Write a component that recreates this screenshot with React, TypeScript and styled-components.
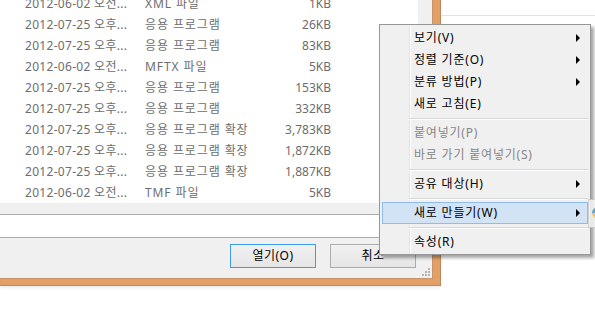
import React from "react";
import styled, { createGlobalStyle } from "styled-components";

const GlobalStyle = createGlobalStyle`
  html, body {
    margin: 0;
    padding: 0;
    background: #fff;
  }
  body {
    width: 595px;
    height: 316px;
    overflow: hidden;
    font-family: "Noto Sans", "Noto Sans CJK KR", sans-serif;
    font-size: 12px;
  }
`;

const Stage = styled.div`
  position: relative;
  display: flex;
  align-items: flex-start;
  width: 595px;
  height: 316px;
  overflow: hidden;
`;

const Frame = styled.div`
  flex: none;
  background: #e3a066;
  padding: 0 7px 6px 0;
  border-right: 1px solid #b98a5f;
  border-bottom: 1px solid #b98a5f;
  box-shadow: 0 2px 3px rgba(0, 0, 0, 0.08);
`;

const Dialog = styled.div`
  position: relative;
  width: 432px;
  height: 278px;
  display: flex;
  flex-direction: column;
  background: #f0f0f0;
  border-right: 1px solid #c99468;
  border-bottom: 1px solid #c99468;
`;

const FileList = styled.div`
  width: 418px;
  height: 203px;
  flex: none;
  background: #fff;
  overflow: hidden;
`;

const Rows = styled.div`
  margin-top: -7px;
`;

const Row = styled.div`
  display: grid;
  grid-template-columns: 120px 110px 76px;
  padding-left: 25px;
  height: 21px;
  align-items: center;
  line-height: 21px;
  color: #6d6d6d;
  white-space: nowrap;
`;

const Cell = styled.span<{ $spacing?: number }>`
  letter-spacing: ${(p) => p.$spacing ?? 0}px;
`;

const Size = styled.span`
  text-align: right;
`;

const FileNameField = styled.div`
  box-sizing: border-box;
  width: 418px;
  height: 24px;
  margin-top: 11px;
  flex: none;
  background: #fff;
  border-top: 1px solid #ababab;
  border-bottom: 1px solid #ababab;
  border-right: 1px solid #ababab;
`;

const ButtonBar = styled.div`
  display: flex;
  justify-content: flex-end;
  gap: 14px;
  margin-top: 6px;
  padding-right: 16px;
`;

const Button = styled.button<{ $primary?: boolean }>`
  box-sizing: border-box;
  width: 86px;
  height: 24px;
  padding: 0;
  font-family: "Noto Sans", "Noto Sans CJK KR", sans-serif;
  font-size: 12px;
  line-height: 20px;
  letter-spacing: 0.5px;
  color: #000;
  background: linear-gradient(#f0f0f0, #e5e5e5);
  border: 1px solid ${(p) => (p.$primary ? "#3c9cf0" : "#acacac")};
  border-radius: 0;
`;

const Grip = styled.svg`
  position: absolute;
  right: 2px;
  bottom: 2px;
`;

const BackWindow = styled.div`
  flex: 1;
  height: 15px;
  border-bottom: 1px solid #e2e2e2;
`;

const Menu = styled.div`
  position: absolute;
  left: 379px;
  top: 24px;
  width: 206px;
  padding: 2px 2px 1px;
  background: #f0f0f0;
  border: 1px solid #979797;
  box-shadow: 3px 3px 3px rgba(0, 0, 0, 0.35);

  &::before {
    content: "";
    position: absolute;
    left: 29px;
    top: 0;
    bottom: 0;
    width: 1px;
    background: #e2e3e3;
    box-shadow: 1px 0 0 #fff;
  }
`;

const MenuItem = styled.div<{ $disabled?: boolean; $active?: boolean }>`
  position: relative;
  z-index: 1;
  box-sizing: border-box;
  height: 22px;
  display: flex;
  align-items: center;
  padding-left: 31px;
  line-height: 20px;
  letter-spacing: 0.8px;
  color: ${(p) => (p.$disabled ? "#868686" : "#000")};
  white-space: nowrap;
  background: ${(p) => (p.$active ? "#d1e3f5" : "transparent")};
  border: 1px solid ${(p) => (p.$active ? "#8fbde9" : "transparent")};
`;

const Arrow = styled.span`
  position: absolute;
  right: 7px;
  top: 6px;
  width: 0;
  height: 0;
  border-left: 4px solid #000;
  border-top: 4px solid transparent;
  border-bottom: 4px solid transparent;
`;

const Separator = styled.div`
  height: 7px;
  position: relative;

  &::after {
    content: "";
    position: absolute;
    left: 27px;
    right: 0;
    top: 3px;
    height: 1px;
    background: #d7d7d7;
    box-shadow: 0 1px 0 #fff;
  }
`;

const SubMenuEdge = styled.div`
  position: absolute;
  left: 588px;
  top: 199px;
  width: 20px;
  height: 27px;
  background: #f4f4f4;
  border: 1px solid #c9c9c9;
  opacity: 0.85;
`;

const FolderIcon = styled.svg`
  position: absolute;
  left: 2px;
  top: 5px;
`;

const files = [
  ["2012-06-02 오전...", "XML 파일", "1KB"],
  ["2012-07-25 오후...", "응용 프로그램", "26KB"],
  ["2012-07-25 오후...", "응용 프로그램", "83KB"],
  ["2012-06-02 오전...", "MFTX 파일", "5KB"],
  ["2012-07-25 오후...", "응용 프로그램", "153KB"],
  ["2012-07-25 오후...", "응용 프로그램", "332KB"],
  ["2012-07-25 오후...", "응용 프로그램 확장", "3,783KB"],
  ["2012-07-25 오후...", "응용 프로그램 확장", "1,872KB"],
  ["2012-07-25 오후...", "응용 프로그램 확장", "1,887KB"],
  ["2012-06-02 오전...", "TMF 파일", "5KB"],
];

type Entry =
  | { sep: true }
  | { label: string; sub?: boolean; disabled?: boolean; active?: boolean };

const menu: Entry[] = [
  { label: "보기(V)", sub: true },
  { label: "정렬 기준(O)", sub: true },
  { label: "분류 방법(P)", sub: true },
  { label: "새로 고침(E)" },
  { sep: true },
  { label: "붙여넣기(P)", disabled: true },
  { label: "바로 가기 붙여넣기(S)", disabled: true },
  { sep: true },
  { label: "공유 대상(H)", sub: true },
  { sep: true },
  { label: "새로 만들기(W)", sub: true, active: true },
  { sep: true },
  { label: "속성(R)" },
];

export default function App() {
  return (
    <Stage>
      <GlobalStyle />
      <Frame>
        <Dialog>
          <FileList>
            <Rows>
              {files.map(([date, type, size], i) => (
                <Row key={i}>
                  <Cell $spacing={0.3}>{date}</Cell>
                  <Cell $spacing={0.9}>{type}</Cell>
                  <Size>{size}</Size>
                </Row>
              ))}
            </Rows>
          </FileList>
          <FileNameField />
          <ButtonBar>
            <Button $primary>열기(O)</Button>
            <Button>취소</Button>
          </ButtonBar>
          <Grip width="8" height="8" viewBox="0 0 8 8">
            <g fill="#b5b5b5">
              <rect x="6" y="0" width="2" height="2" />
              <rect x="3" y="3" width="2" height="2" />
              <rect x="6" y="3" width="2" height="2" />
              <rect x="0" y="6" width="2" height="2" />
              <rect x="3" y="6" width="2" height="2" />
              <rect x="6" y="6" width="2" height="2" />
            </g>
          </Grip>
        </Dialog>
      </Frame>
      <BackWindow />

      <Menu>
        {menu.map((m, i) =>
          "sep" in m ? (
            <Separator key={i} />
          ) : (
            <MenuItem key={i} $disabled={m.disabled} $active={m.active}>
              {m.label}
              {m.sub && <Arrow />}
            </MenuItem>
          )
        )}
      </Menu>

      <SubMenuEdge>
        <FolderIcon width="14" height="16" viewBox="0 0 14 16">
          <circle cx="7" cy="8" r="6" fill="#f2c94c" />
          <path d="M1 8a6 6 0 0 1 12 0z" fill="#5a9be0" />
        </FolderIcon>
      </SubMenuEdge>
    </Stage>
  );
}
